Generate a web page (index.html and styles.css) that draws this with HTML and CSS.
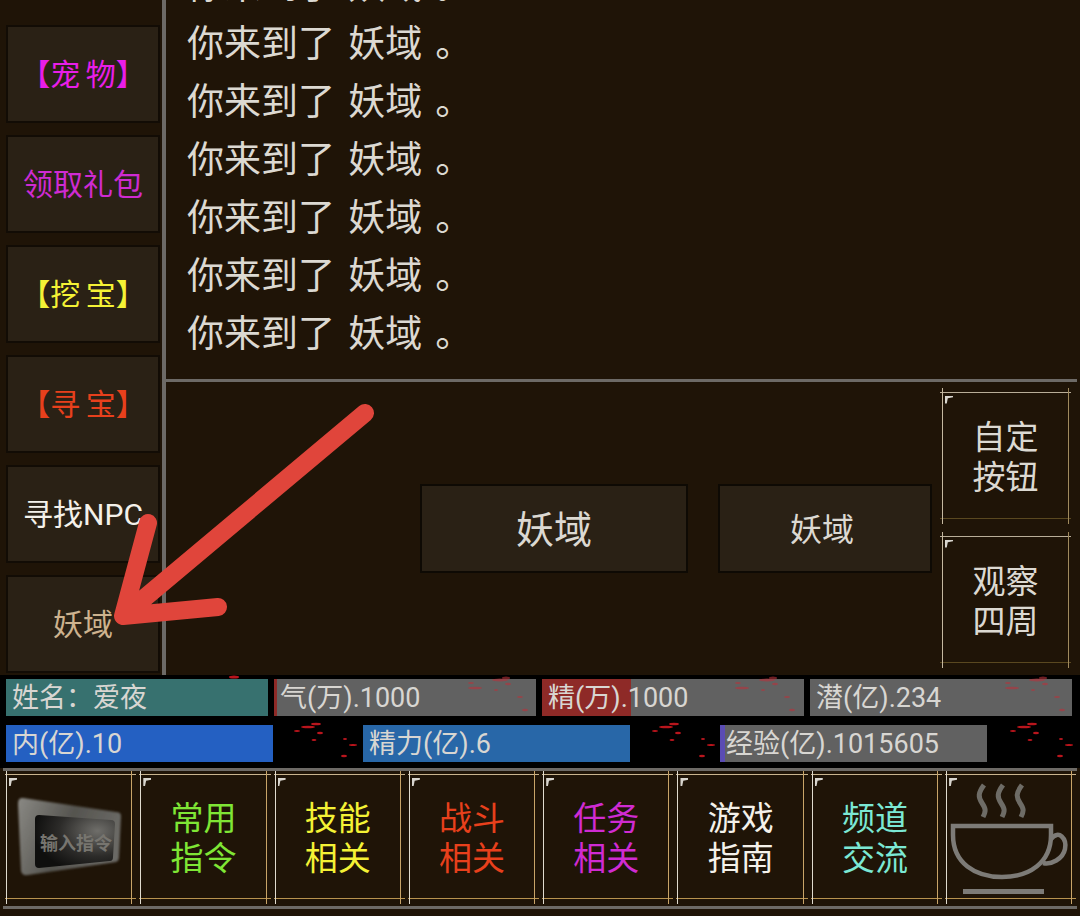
FILE: index.html
```html
<!DOCTYPE html>
<html lang="zh-CN">
  <head>
    <meta charset="UTF-8" />
    <title>妖域</title>
    <link rel="stylesheet" href="styles.css">
  </head>
  <body>
    <div class="page">
      <div class="top">
        <div class="sidebar">
          <div class="side-btn pink">【宠 物】</div>
          <div class="side-btn violet">领取礼包</div>
          <div class="side-btn yellow">【挖 宝】</div>
          <div class="side-btn red">【寻 宝】</div>
          <div class="side-btn white">寻找NPC</div>
          <div class="side-btn tan">妖域</div>
        </div>

        <div class="main">
          <div class="log">
            <p>你来到了 妖域 。</p>
            <p>你来到了 妖域 。</p>
            <p>你来到了 妖域 。</p>
            <p>你来到了 妖域 。</p>
            <p>你来到了 妖域 。</p>
            <p>你来到了 妖域 。</p>
            <p>你来到了 妖域 。</p>
          </div>

          <div class="actions">
            <div class="action-btn wide">妖域</div>
            <div class="action-btn narrow">妖域</div>
            <div class="side-frames">
              <div class="frame soft"><span class="corner"></span>自定<br />按钮</div>
              <div class="frame soft"><span class="corner"></span>观察<br />四周</div>
            </div>
          </div>
        </div>
      </div>

      <div class="status">
        <div class="bar-row first">
          <div class="bar teal"><span class="bar-text">姓名：爱夜</span></div>
          <div class="bar grey"><i class="fill blood" style="width: 1%"></i><span class="bar-text">气(万).1000</span></div>
          <div class="bar grey"><i class="fill blood" style="width: 34%"></i><span class="bar-text">精(万).1000</span></div>
          <div class="bar grey"><span class="bar-text">潜(亿).234</span></div>
        </div>
        <div class="bar-row second">
          <div class="bar blue"><span class="bar-text">内(亿).10</span></div>
          <div class="bar steel"><span class="bar-text">精力(亿).6</span></div>
          <div class="bar grey"><i class="fill purple" style="width: 2%"></i><span class="bar-text">经验(亿).1015605</span></div>
        </div>

        <!-- blood specks that repeat over the bars -->
        <svg class="specks" width="1080" height="93" viewBox="0 0 1080 93">
          <defs>
            <filter id="speckBlur"><feGaussianBlur stdDeviation="0.6" /></filter>
            <g id="speckA" fill="#b8323a" opacity="0.6" filter="url(#speckBlur)">
              <ellipse cx="230" cy="5" rx="8" ry="1.5" />
              <ellipse cx="236" cy="3" rx="4" ry="1.5" />
              <ellipse cx="238" cy="9" rx="3" ry="1.2" />
              <ellipse cx="205" cy="13" rx="7" ry="1.3" />
              <ellipse cx="201" cy="8" rx="3" ry="1" />
              <ellipse cx="250" cy="22" rx="3" ry="1" />
              <ellipse cx="255" cy="35" rx="3" ry="1.2" />
              <ellipse cx="226" cy="15" rx="2" ry="1" />
            </g>
            <g id="speckB" fill="#b8141c" filter="url(#speckBlur)">
              <ellipse cx="308" cy="52" rx="7" ry="1.3" />
              <ellipse cx="316" cy="49" rx="5" ry="1.3" />
              <ellipse cx="297" cy="56" rx="3" ry="1" />
              <ellipse cx="320" cy="58" rx="3" ry="1.2" />
              <ellipse cx="314" cy="65" rx="2.5" ry="1" />
              <ellipse cx="353" cy="70" rx="4" ry="1" />
              <ellipse cx="345" cy="64" rx="2" ry="1" />
              <ellipse cx="344" cy="81" rx="3" ry="1.2" />
            </g>
          </defs>
          <ellipse cx="234" cy="2" rx="5" ry="1.5" fill="#b8141c" />
          <use href="#speckA" x="270" />
          <use href="#speckA" x="537" />
          <use href="#speckA" x="807" />
          <use href="#speckB" />
          <use href="#speckB" x="358" />
          <use href="#speckB" x="716" />
        </svg>
      </div>

      <div class="tiles">
        <div class="frame tile">
          <span class="corner"></span>
          <svg class="tile-pic" width="134" height="134" viewBox="0 0 134 134">
            <defs>
              <linearGradient id="keyEdge" x1="0" y1="0" x2="1" y2="0.3">
                <stop offset="0" stop-color="#8a8984" />
                <stop offset="0.55" stop-color="#55544f" />
                <stop offset="1" stop-color="#6a6965" />
              </linearGradient>
              <radialGradient id="keyFace" cx="0.78" cy="0.3" r="0.8">
                <stop offset="0" stop-color="#6f6e6a" />
                <stop offset="0.6" stop-color="#2c2b29" />
                <stop offset="1" stop-color="#0f0f0e" />
              </radialGradient>
              <filter id="soften"><feGaussianBlur stdDeviation="1" /></filter>
            </defs>
            <path d="M18 27 Q13 26 13 33 L16 100 Q17 105 23 104 L111 91 Q114 90 114 86 L116 45 Q116 41 111 41 Z" fill="url(#keyEdge)" filter="url(#soften)" />
            <path d="M34 44 Q30 44 30 48 L30 93 Q30 97 34 97 L105 90 Q108 90 108 86 L110 53 Q110 49 106 49 Z" fill="url(#keyFace)" />
            <text class="key-text" x="35" y="79">输入指令</text>
          </svg>
        </div>
        <div class="frame tile green"><span class="corner"></span>常用<br />指令</div>
        <div class="frame tile yellow"><span class="corner"></span>技能<br />相关</div>
        <div class="frame tile red"><span class="corner"></span>战斗<br />相关</div>
        <div class="frame tile violet"><span class="corner"></span>任务<br />相关</div>
        <div class="frame tile white"><span class="corner"></span>游戏<br />指南</div>
        <div class="frame tile aqua"><span class="corner"></span>频道<br />交流</div>
        <div class="frame tile">
          <span class="corner"></span>
          <svg class="tile-pic" width="134" height="134" viewBox="0 0 134 134">
            <g fill="none" stroke="#7d7b77" stroke-width="4.5">
              <path d="M8 55 H106 V64 C106 92 84 106 57 106 C30 106 8 92 8 64 Z" />
              <path d="M106 68 C114 58 122 68 120 78 C118 88 106 94 98 92" />
              <path d="M39 14 C33 22 33 26 37 32 C41 38 41 40 38 46" stroke-width="5" opacity="0.85" />
              <path d="M58 14 C52 22 52 26 56 32 C60 38 60 40 57 46" stroke-width="5" opacity="0.85" />
              <path d="M77 14 C71 22 71 26 75 32 C79 38 79 40 76 46" stroke-width="5" opacity="0.85" />
            </g>
            <rect x="18" y="118" width="81" height="5" fill="#7d7b77" />
          </svg>
        </div>
      </div>

      <!-- red arrow someone drew on the screenshot -->
      <svg class="arrow" width="1080" height="916" viewBox="0 0 1080 916">
        <path d="M365 413 L123 616 M148 523 L123 616 L218 607" fill="none" stroke="#e0453b" stroke-width="18" stroke-linecap="round" stroke-linejoin="round" />
      </svg>
    </div>
  </body>
</html>
```

FILE: styles.css
```css
body {
  margin: 0;
  background: #1f1407;
  font-family: Roboto, "Noto Sans CJK SC", sans-serif;
  color: #dcd9d2;
}

.page {
  position: relative;
  width: 1080px;
  height: 916px;
  overflow: hidden;
  display: flex;
  flex-direction: column;
}

.top {
  display: flex;
  height: 675px;
}

.sidebar {
  width: 154px;
  padding: 25px 2px 0 6px;
  display: flex;
  flex-direction: column;
  gap: 12px;
}

.side-btn {
  height: 98px;
  box-sizing: border-box;
  padding-bottom: 5px;
  display: flex;
  align-items: center;
  justify-content: center;
  background: #2a2115;
  border: 2px solid #120c05;
  font-size: 30px;
  word-spacing: -2px;
  white-space: pre;
}

.pink {
  color: #e81ee8;
}

.violet {
  color: #cf2bd2;
}

.yellow {
  color: #f4f235;
}

.red {
  color: #e8401c;
}

.white {
  color: #f4f1ea;
}

.tan {
  color: #cdb28e;
}

.green {
  color: #7fe635;
}

.aqua {
  color: #7be8d4;
}

.main {
  flex: 1;
  display: flex;
  flex-direction: column;
  border-left: 4px solid #6d6a66;
}

.log {
  height: 382px;
  padding-left: 21px;
  padding-bottom: 15px;
  margin-right: 3px;
  box-sizing: border-box;
  display: flex;
  flex-direction: column;
  justify-content: flex-end;
  overflow: hidden;
  font-size: 37px;
  word-spacing: 4px;
  color: #dcd9d2;
  border-bottom: 3px solid #6d6a66;
}

.log p {
  margin: 0;
  flex: none;
  height: 58px;
  line-height: 58px;
  white-space: pre;
}

.actions {
  flex: 1;
  display: flex;
  align-items: center;
  justify-content: flex-end;
  padding-right: 11px;
}

.action-btn {
  height: 89px;
  box-sizing: border-box;
  padding-bottom: 4px;
  display: flex;
  align-items: center;
  justify-content: center;
  background: #2a2115;
  border: 2px solid #0e0a04;
}

.wide {
  width: 268px;
  margin-right: 30px;
  font-size: 38px;
}

.narrow {
  width: 214px;
  margin-right: 10px;
  padding-right: 6px;
  font-size: 32px;
}

.side-frames {
  width: 127px;
  display: flex;
  flex-direction: column;
  gap: 14px;
}

/* thin lines run past the corners, so they are two pseudo boxes */
.frame {
  position: relative;
  box-sizing: border-box;
  display: flex;
  align-items: center;
  justify-content: center;
  text-align: center;
  font-size: 33px;
  line-height: 40px;
}

.frame::before,
.frame::after {
  content: "";
  position: absolute;
  pointer-events: none;
}

.soft {
  height: 130px;
  padding-top: 2px;
}

.soft::before {
  left: -2px;
  right: -2px;
  top: 0;
  bottom: 3px;
  border-top: 1px solid #b9ad98;
  border-bottom: 1px solid #5a4820;
}

.soft::after {
  left: 0;
  right: 0;
  top: -4px;
  bottom: -2px;
  border-left: 1px solid #c5b8a0;
  border-right: 1px solid #a08a5e;
}

.corner {
  position: absolute;
  left: 3px;
  top: 4px;
  width: 8px;
  height: 8px;
  background: #d8d5ce;
  clip-path: polygon(0 0, 100% 0, 100% 22%, 35% 35%, 22% 100%, 0 100%);
}

.status {
  position: relative;
  height: 93px;
  box-sizing: border-box;
  padding: 4px 0 0 6px;
  background: #000;
  display: flex;
  flex-direction: column;
  gap: 9px;
}

.bar-row {
  display: flex;
  height: 37px;
}

.first {
  gap: 6px;
}

.first .bar {
  width: 262px;
}

.second {
  gap: 90px;
}

.second .bar {
  width: 267px;
}

.bar {
  position: relative;
  height: 37px;
  line-height: 37px;
  font-size: 27px;
  color: #d8d6d2;
  overflow: hidden;
}

.bar-text {
  position: relative;
  display: block;
  padding: 1px 0 0 6px;
  white-space: pre;
}

.fill {
  position: absolute;
  left: 0;
  top: 0;
  bottom: 0;
}

.teal {
  background: #37716f;
}

.grey {
  background: #616161;
}

.blue {
  background: #2460c2;
}

.steel {
  background: #2867a8;
}

.blood {
  background: #8e2a27;
}

.purple {
  background: #5a4cb4;
}

.specks {
  position: absolute;
  left: 0;
  top: 0;
}

.tiles {
  height: 135px;
  margin: 0 3px 0 3px;
  padding: 0 0 0 2px;
  display: grid;
  grid-template-columns: repeat(8, 134.3px);
  border-top: 3px solid #6d6a66;
  border-bottom: 3px solid #6d6a66;
}

.tile {
  height: 134px;
  padding: 2px 6px 0 0;
}

.tile::before {
  left: 0;
  right: 3px;
  top: 3px;
  bottom: 6px;
  border-top: 1px solid #c9b48e;
  border-bottom: 1px solid #b8934f;
}

.tile::after {
  left: 1px;
  right: 7px;
  top: 0;
  bottom: 1px;
  border-left: 1px solid #e0dbcf;
  border-right: 1px solid #c8a468;
}

.tile .corner {
  left: 4px;
  top: 7px;
}

.tile-pic {
  position: absolute;
  left: 0;
  top: 0;
}

.key-text {
  font-size: 18px;
  font-weight: 700;
  fill: #77756f;
}

.arrow {
  position: absolute;
  left: 0;
  top: 0;
  pointer-events: none;
}
```
